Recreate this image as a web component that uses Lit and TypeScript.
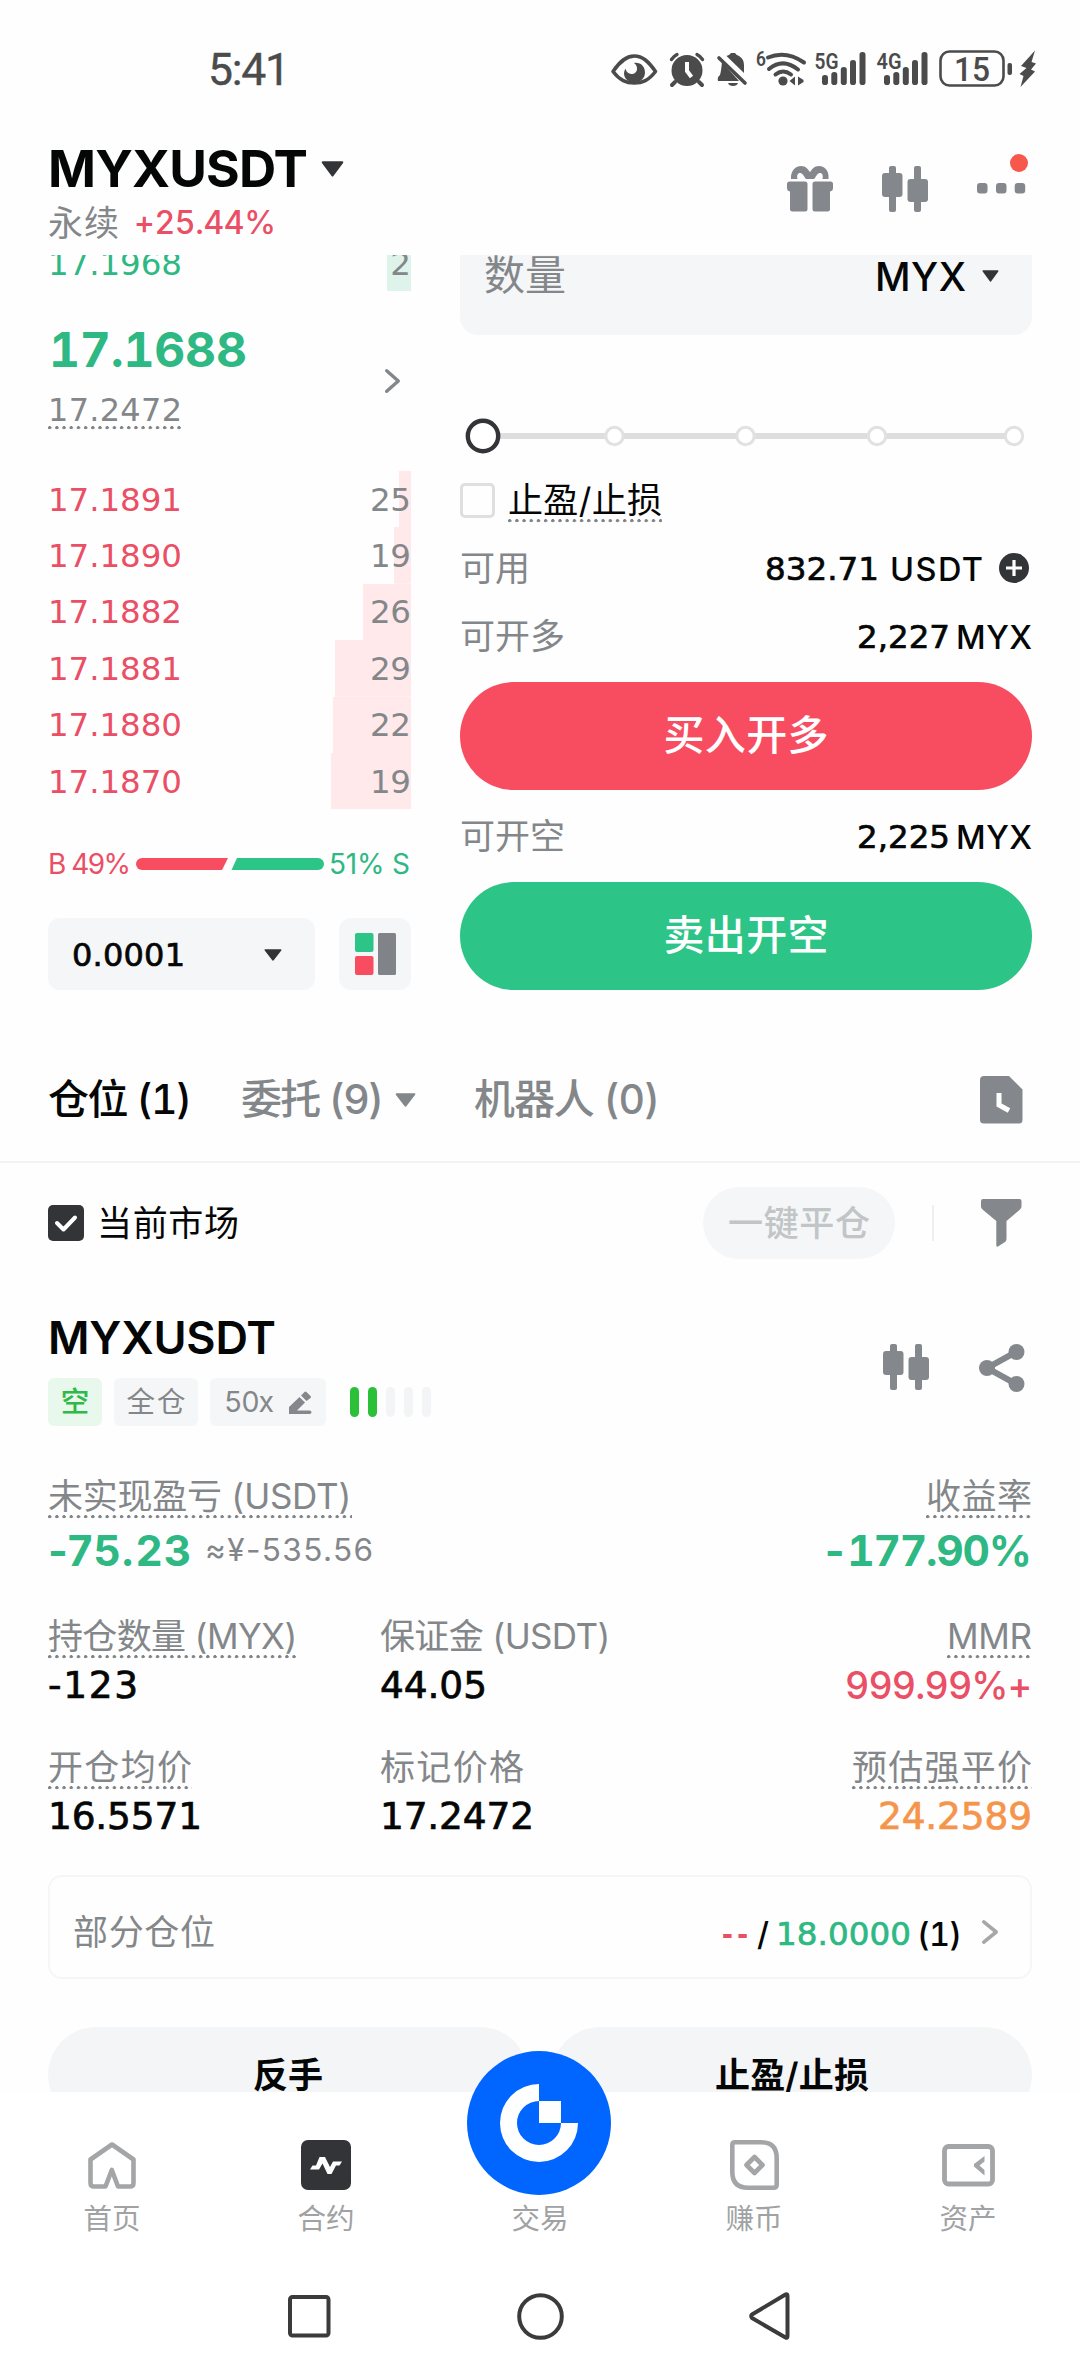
import { LitElement, html, svg, css, nothing } from "lit";
import { customElement, property } from "lit/decorators.js";

/** A run of text whose tracking is set so that it takes up a given width. */
@customElement("fit-text")
class FitText extends LitElement {
  @property() text = "";
  @property({ type: Number }) w = 0;

  static styles = css`
    :host { display: inline-block; white-space: pre; flex: none; }
  `;

  updated() {
    this.style.width = "auto";
    this.style.letterSpacing = "0px";
    if (!this.w) return;
    const natural = this.getBoundingClientRect().width;
    const gaps = Math.max(1, [...this.text].length - 1);
    this.style.letterSpacing = `${((this.w - natural) / gaps).toFixed(3)}px`;
    this.style.width = `${this.w}px`;
  }

  render() { return html`${this.text}`; }
}

const t = (text: string, w = 0, cls = "") =>
  html`<fit-text class=${cls} .text=${text} .w=${w}></fit-text>`;

const caret = (w: number, h: number, color = "#333437") => html`
  <svg class="ic" width=${w} height=${h} viewBox="0 0 20 14" preserveAspectRatio="none">
    <path d="M1.6 1.2H18.4L10 12.6Z" fill=${color} stroke=${color} stroke-width="2" stroke-linejoin="round"/>
  </svg>`;

const candles = html`
  <svg class="ic" width="46" height="46" viewBox="0 0 46 46" fill="#84888c">
    <rect x="7" y="0" width="7" height="46" rx="2"/><rect x="0" y="7" width="20.5" height="24" rx="3"/>
    <rect x="32" y="0" width="7" height="46" rx="2"/><rect x="25.5" y="13" width="20.5" height="23" rx="3"/>
  </svg>`;

const chevron = (w: number, h: number, color: string, sw: number) => html`
  <svg class="ic" width=${w} height=${h} viewBox="0 0 ${w} ${h}" fill="none">
    <path d="M${sw / 2} ${sw / 2}L${w - sw / 2} ${h / 2}L${sw / 2} ${h - sw / 2}" stroke=${color} stroke-width=${sw} stroke-linejoin="round" stroke-linecap="round"/>
  </svg>`;

const bars = (x: number) =>
  [[822, 75], [831.3, 72], [840.8, 67], [850, 60], [859.5, 52]].map(
    ([bx, by]) => svg`<rect x=${bx - 606 + x} y=${by - 46} width="6" height=${85 - by} rx="2.8"/>`
  );

const statusIcons = html`
  <svg class="ic" width="434" height="44" viewBox="0 0 434 44" fill="#4b4b4b">
    <path d="M7 25.500C14 15.500 20 10 28.300 10S42.500 15.500 49.500 25.500C42.500 34.500 36.500 37 28.300 37S14 34.500 7 25.500Z" fill="none" stroke="#4b4b4b" stroke-width="3.600" stroke-linejoin="round"/>
    <path d="M28 17C33.500 21 31 28.500 25.500 28C21.500 27.600 20 25 19.500 22.500C15.500 29 20 36.500 28.500 36.500C34.500 36.500 39 32 39 26.500C39 20.500 34.500 16 28 17Z"/>
    <g transform="translate(63 0)">
      <circle cx="18" cy="24.500" r="15.500"/>
      <path d="M6 36L3 39M30 36L33 39" stroke="#4b4b4b" stroke-width="4" stroke-linecap="round"/>
      <path d="M2.500 13.500Q5 10 8 8.500M33.500 13.500Q31 10 28 8.500" fill="none" stroke="#4b4b4b" stroke-width="3.400" stroke-linecap="round"/>
      <path d="M18 16V25L22.500 31" fill="none" stroke="#fff" stroke-width="4"/>
    </g>
    <g transform="translate(111 0)">
      <path d="M9.500 10Q13 9 14 7H18Q19 9 22 10Q27 13 27 19V27Z"/>
      <path d="M5 16Q4 26 3 29Q0 31 1 35H22Z"/>
      <path d="M11 37H21Q20 40 16 40T11 37Z"/>
      <path d="M2 12L28 37" stroke="#4b4b4b" stroke-width="3.600" stroke-linecap="round"/>
    </g>
    <text class="st" x="150" y="20" font-size="21" textLength="10" lengthAdjust="spacingAndGlyphs">6</text>
    <g fill="none" stroke="#4b4b4b" stroke-width="4">
      <path d="M162 11.500Q180 4 198 16.500" stroke-linecap="round"/>
      <path d="M163 23Q177 11.500 192 23.500" stroke-linecap="round"/>
      <path d="M169.500 28.500Q177 22.500 185 28.500" stroke-linecap="round"/>
    </g>
    <circle cx="177" cy="35" r="4.600"/>
    <path d="M189 30.500V39.500L183.500 35ZM192 30.500L197.500 34V36L192 39.500Z"/>
    <text class="st" x="208.500" y="22.500" font-size="22" textLength="24" lengthAdjust="spacingAndGlyphs">5G</text>
    ${bars(0)}
    <text class="st" x="270.500" y="22.500" font-size="22" textLength="25" lengthAdjust="spacingAndGlyphs">4G</text>
    ${bars(62)}
    <rect x="334.500" y="5.500" width="63" height="34" rx="9" fill="none" stroke="#4b4b4b" stroke-width="2.600"/>
    <text class="st lvl" x="348" y="34.500" font-size="33" textLength="36" lengthAdjust="spacingAndGlyphs">15</text>
    <rect x="401.500" y="17" width="4.500" height="12" rx="2"/>
    <path d="M429 4.500L415 20L420.500 22L413.500 28L417.500 30L414.500 41L429 25.500L425 23.500L430 17.500L425.500 16Z"/>
  </svg>`;

const gift = html`
  <svg class="ic" width="46" height="46" viewBox="0 0 46 46" fill="#84888c">
    <path d="M4 13C3.500 4 9 0 14 0C19 0 20.500 3 23 6C25.500 3 27 0 32 0C37 0 42.500 4 41.500 13H35.500C36.500 9 35 6.500 32.500 7C29.500 8 29 11 27 13H19C17 11 16.500 8 13.500 7C11 6.500 9.500 9 10.500 13Z"/>
    <path d="M2.500 15.500H18Q20.500 15.500 20.500 18V43Q20.500 45.500 18 45.500H5.500Q3 45.500 3 43V25.500Q0 25 0 22V18Q0 15.500 2.500 15.500Z"/>
    <path d="M28 15.500H43.500Q46 15.500 46 18V22Q46 25 43 25.500V43Q43 45.500 40.500 45.500H28Q25.500 45.500 25.500 43V18Q25.500 15.500 28 15.500Z"/>
  </svg>`;

const dots = html`
  <svg class="ic" width="49" height="46" viewBox="0 0 49 46" fill="#84888c">
    <rect x="0" y="17" width="10.500" height="10.500" rx="3"/><rect x="19" y="17" width="10.500" height="10.500" rx="3"/><rect x="37.700" y="17" width="10.500" height="10.500" rx="3"/>
  </svg>`;

const historyIcon = html`
  <svg class="ic" width="43" height="48" viewBox="0 0 43 48">
    <path d="M4 0H29L42.500 13.500V44Q42.500 47.500 39 47.500H4Q0 47.500 0 44V4Q0 0 4 0Z" fill="#84888c"/>
    <path d="M19 17V29L29 34.500" fill="none" stroke="#fff" stroke-width="5"/>
  </svg>`;

const filterIcon = html`
  <svg class="ic" width="41" height="48" viewBox="0 0 41 48">
    <path d="M2 0H38.500Q40.500 0 40.500 2V7.500Q40.500 9 39 10.500L25.500 22V40Q25.500 42 24 43L17 47.500Q15.300 48 15.300 46.500V22L1.500 10.500Q0 9 0 7.500V2Q0 0 2 0Z" fill="#84888c"/>
  </svg>`;

const shareIcon = html`
  <svg class="ic" width="46" height="48" viewBox="0 0 46 48" fill="#84888c">
    <path d="M37 8L8 24L37 40" fill="none" stroke="#84888c" stroke-width="6"/>
    <circle cx="37.500" cy="8" r="8"/><circle cx="8" cy="24" r="8"/><circle cx="37.500" cy="40" r="8"/>
  </svg>`;

const pencil = html`
  <svg class="ic" width="23" height="23" viewBox="0 0 23 23" fill="#84888c">
    <path d="M0 23V16L10.500 6L16 11.500L8 19.500H20.500Q22.500 19.500 22.500 21.200T20.500 23Z"/>
    <path d="M12 4.500L15.500 1Q16.500 0 17.500 1L21.500 5Q22.500 6 21.500 7L17.500 10Z"/>
  </svg>`;

const homeIcon = html`
  <svg class="ic" width="48" height="47" viewBox="0 0 48 47" fill="none" stroke="#a3a5a7" stroke-width="4.600" stroke-linejoin="round">
    <path d="M6 44.500H17.500L23.800 28L30 44.500H42Q45.500 44.500 45.500 41V17.500L24 2.500L2.500 17.500V41Q2.500 44.500 6 44.500Z"/>
  </svg>`;

const contractIcon = html`
  <svg class="ic" width="50" height="50" viewBox="0 0 50 50">
    <rect width="50" height="50" rx="7" fill="#333437"/>
    <path d="M9 29.500L11.500 25.500H15L18.500 17H24L29 27L32 21.500H41L38.500 25.500H35L30.500 34H26.500L21.500 23.500L18 29.500Z" fill="#fff"/>
  </svg>`;

const earnIcon = html`
  <svg class="ic" width="49" height="50" viewBox="0 0 49 50" fill="none" stroke="#a3a5a7" stroke-width="4.600" stroke-linejoin="round">
    <path d="M5 2.300H31Q46.700 2.300 46.700 18V44.500Q46.700 47.700 43.500 47.700H18Q2.300 47.700 2.300 32V5Q2.300 2.300 5 2.300Z"/>
    <path d="M24.500 17L32.500 25L24.500 33L16.500 25Z"/>
  </svg>`;

const walletIcon = html`
  <svg class="ic" width="53" height="43" viewBox="0 0 53 43">
    <rect x="2.500" y="2.500" width="48" height="37.500" rx="4" fill="none" stroke="#a3a5a7" stroke-width="4.800"/>
    <path d="M42.500 12V17.500L37.500 21.500L42.500 26V31.500L32 22.500V20Z" fill="#a3a5a7"/>
  </svg>`;

const logo = html`
  <svg class="ic" width="144" height="144" viewBox="0 0 144 144">
    <circle cx="72" cy="72" r="72" fill="#0066ff"/>
    <path d="M72 33A39 39 0 1 0 111 72H94A22 22 0 1 1 72 50Z" fill="#fff"/>
    <rect x="72" y="50" width="22" height="22" fill="#fff"/>
  </svg>`;

const ASKS = [
  { price: "17.1891", size: "25", bar: 12 },
  { price: "17.1890", size: "19", bar: 17 },
  { price: "17.1882", size: "26", bar: 48 },
  { price: "17.1881", size: "29", bar: 76 },
  { price: "17.1880", size: "22", bar: 78 },
  { price: "17.1870", size: "19", bar: 80 },
];

@customElement("app-root")
class AppRoot extends LitElement {
  static styles = css`
    :host {
      display: block; width: 1080px; height: 2376px; overflow: hidden; background: #fefefe; color: #050606;
      font-family: Inter, "Noto Sans CJK SC", sans-serif; font-feature-settings: "tnum";
      font-size: 35px; line-height: 1.2; white-space: nowrap;
    }
    * { box-sizing: border-box; }
    .ic { display: block; flex: none; overflow: visible; }
    .row { display: flex; align-items: center; }
    .grow { flex: 1; }
    .grey { color: #84878a; }
    .red { color: #ea4f65; }
    .green { color: #2eb883; }
    .orange { color: #f5954b; }
    .fig { font-family: "DejaVu Sans", Inter, sans-serif; font-weight: 400; }
    .num .fig, .val .fig, .sel .fig { -webkit-text-stroke: 0.700px currentColor; }
    .pnum { font-feature-settings: normal; }
    .st { font-family: Roboto, "Noto Sans", sans-serif; font-weight: 600; }
    .lvl { font-weight: 500; }

    .status { display: flex; height: 142px; padding: 46px 40px 0 208px; justify-content: space-between; }
    .time { font: 400 44.500px/49px Roboto, sans-serif; color: #4b4b4b; -webkit-text-stroke: 0.400px #4b4b4b; }
    .header { display: flex; height: 113px; padding: 0 54px 0 48px; justify-content: space-between; align-items: flex-start; }
    .symbol { height: 54px; gap: 13px; font-size: 51.500px; font-weight: 700; }
    .sub { height: 53px; gap: 15px; font-size: 35px; }
    .chg { font-size: 32px; font-weight: 500; margin-top: 2px; }
    .tools { display: flex; gap: 49px; padding-top: 24px; }
    .more { position: relative; }
    .badge { position: absolute; right: -2px; top: -12px; width: 18px; height: 18px; border-radius: 50%; background: #f6594b; }

    .scroll { height: 1837px; overflow: hidden; }
    .trade { display: flex; margin-top: -40px; padding: 0 48px; gap: 49px; }
    .book { width: 363px; padding-top: 19.600px; }
    .lv { display: flex; align-items: center; justify-content: space-between; height: 56.400px; padding-top: 2px; font-size: 32.500px; background: linear-gradient(#ffe9ea, #ffe9ea) no-repeat right / var(--bar) 100%; }
    .lv.bid { background-image: linear-gradient(#def4ea, #def4ea); padding-top: 4px; }
    .mid { display: flex; justify-content: space-between; align-items: center; height: 180px; padding: 0 11px 0 0; }
    .midl { align-self: flex-start; padding-top: 34px; }
    .last { display: flex; align-items: center; height: 50px; margin-bottom: 5px; font-size: 48px; font-weight: 700; padding-left: 1px; }
    .mark { display: flex; align-items: center; height: 60px; font-size: 32px; }
    .dot {
      display: inline-flex; align-items: center; height: 48px;
      background: radial-gradient(circle at 1.700px 1.700px, #808386 1.400px, transparent 1.900px) repeat-x left bottom / 7.200px 5px;
    }
    .markd { height: 42px; }
    .ratio { display: flex; align-items: center; height: 36px; margin: 36.400px 0 36px; font-size: 28px; }
    .ratio fit-text { margin-top: 2px; }
    .ratio svg { margin: 0 5px; }
    .tick { display: flex; gap: 24px; }
    .sel { display: flex; align-items: center; justify-content: space-between; width: 267px; height: 72px; border-radius: 12px; background: #f4f6f8; padding: 2px 33px 0 24px; font-size: 32px; }
    .mode { display: flex; align-items: center; justify-content: center; width: 72px; height: 72px; border-radius: 12px; background: #f4f6f8; }

    .form { width: 572px; }
    .qty { display: flex; align-items: center; height: 120px; border-radius: 18px; background: #f4f6f8; padding: 2px 33px 0 24px; font-size: 41px; }
    .unit { font-size: 39px; font-weight: 500; margin: 2px 16px 0 0; }
    .slider { margin: 71px 0 9px; }
    .tpsl { display: flex; align-items: center; height: 50px; gap: 13px; margin-bottom: 9px; }
    .box { width: 35px; height: 35px; border: 3px solid #dfdfdf; border-radius: 5px; }
    .tpsl .dot { height: 44px; margin-top: 4px; padding-bottom: 4px; }
    .kv { display: flex; align-items: center; justify-content: space-between; height: 68px; }
    .kv.tall { height: 92px; }
    .num { font-size: 32.500px; font-weight: 500; }
    .amt { margin-top: 2px; }
    .avail { display: flex; align-items: center; gap: 16px; padding-right: 3px; }
    .btn { display: flex; align-items: center; justify-content: center; height: 108px; border-radius: 54px; color: #fff; font-size: 41px; font-weight: 500; }
    .buy { background: #f84d61; margin-top: 12px; }
    .sell { background: #2dc487; }

    .tabs { display: flex; align-items: center; height: 125px; margin-top: 48px; padding: 0 57px 0 48px; border-bottom: 2px solid #f2f3f4; font-size: 41px; font-weight: 500; }
    .filter { display: flex; align-items: center; height: 72px; margin-top: 24px; padding: 0 58px 0 48px; }
    .checked { display: flex; align-items: center; justify-content: center; width: 36px; height: 36px; border-radius: 5px; background: #333437; margin-right: 13px; }
    .pill { display: flex; align-items: center; justify-content: center; width: 192px; height: 72px; border-radius: 36px; background: #f4f6f8; color: #c2c5c6; font-weight: 500; }
    .vline { width: 2px; height: 36px; background: #eeeff0; margin: 0 47px 0 37px; }

    .pos { padding: 0 48px; }
    .phead { display: flex; justify-content: space-between; height: 115px; margin-top: 52px; }
    .pname { display: flex; align-items: center; height: 54px; font-size: 45px; font-weight: 600; margin-bottom: 13px; }
    .tags { display: flex; gap: 12px; font-size: 28.500px; }
    .tag { display: flex; align-items: center; justify-content: center; height: 48px; border-radius: 6px; background: #f4f6f8; color: #84878a; }
    .short { width: 54px; background: #e9f8ec; color: #2fb947; font-weight: 500; }
    .margin { width: 84px; }
    .lev { gap: 15px; width: 116px; }
    .pacts { display: flex; gap: 50px; padding: 33px 7px 0 0; }
    .risk { display: flex; gap: 9px; align-items: center; margin-left: 12px; }
    .risk i { width: 9px; height: 30px; border-radius: 5px; background: #f2f4f5; }
    .risk i.on { background: #2cc038; }
    .stats { display: grid; grid-template-columns: 332px 1fr auto; }
    .st1 { margin-top: 45px; }
    .st2 { margin-top: 31px; }
    .st3 { margin-top: 32px; }
    .cell { display: flex; flex-direction: column; align-items: flex-start; }
    .cell.end { align-items: flex-end; }
    .lab { display: flex; align-items: center; height: 48px; padding-top: 1px; color: #84878a; font-size: 35px; }
    .val { display: flex; align-items: center; height: 51px; padding-top: 1px; font-size: 37.500px; font-weight: 500; }
    .big { height: 61px; font-size: 42.500px; font-weight: 700; }
    .fiat { font-size: 31.500px; font-weight: 400; margin-left: 14px; }
    .part { display: flex; align-items: center; height: 104px; margin-top: 34px; border: 2px solid #f5f6f7; border-radius: 14px; padding: 10px 32px 0 23px; }
    .order { margin-top: 4px; }
    .dash { font-family: "Liberation Sans", sans-serif; font-weight: 700; }
    .acts { display: flex; gap: 24px; margin-top: 48px; }
    .act { flex: 1; display: flex; align-items: center; justify-content: center; height: 96px; border-radius: 48px; background: #f3f5f7; font-weight: 600; }

    .bottom { position: relative; height: 284px; background: #fff; }
    .nav { display: grid; grid-template-columns: repeat(5, 1fr); padding: 46px 5px 0; }
    .item { display: flex; flex-direction: column; align-items: center; color: #a0a2a4; font-size: 28.500px; }
    .pic { display: flex; align-items: center; justify-content: center; height: 54px; }
    .item span { display: flex; align-items: center; height: 54px; }
    .fab { position: absolute; left: 467px; top: -41px; }
    .sys { display: flex; align-items: center; justify-content: space-between; height: 120px; margin-top: 10px; padding: 0 290px 0 288px; }

    .g6 { width: 6px; }
    .g9 { width: 9px; }
    .g11 { width: 11px; }
    .g20 { width: 20px; }
    .g49 { width: 49px; }
    .g58 { width: 58px; }
  `;

  private get book() {
    return html`
      <div class="book">
        <div class="lv bid" style="--bar:24px">${t("17.1968", 134, "fig green")}${t("2", 0, "fig grey")}</div>
        <div class="mid">
          <div class="midl">
            <div class="last green">${t("17.1688", 198)}</div>
            <div class="mark grey"><span class="dot markd">${t("17.2472", 134, "fig")}</span></div>
          </div>
          ${chevron(15, 24, "#84878a", 3.4)}
        </div>
        ${ASKS.map((a) => html`
          <div class="lv" style="--bar:${a.bar}px">${t(a.price, 134, "fig red")}${t(a.size, 41, "fig grey")}</div>`)}
        <div class="ratio">
          ${t("B 49%", 83, "red pnum")}
          <svg class="ic" width="188" height="12" viewBox="0 0 188 12">
            <path d="M6 0H92L86 12H6A6 6 0 0 1 6 0Z" fill="#f84d61"/>
            <path d="M101 0H182A6 6 0 0 1 182 12H95.500Z" fill="#2dc487"/>
          </svg>
          ${t("51% S", 81, "green pnum")}
        </div>
        <div class="tick">
          <div class="sel">${t("0.0001", 113, "fig")}${caret(18, 12)}</div>
          <div class="mode">
            <svg class="ic" width="41" height="42" viewBox="0 0 41 42">
              <rect width="18.500" height="19" rx="2" fill="#2dc487"/><rect y="23" width="18.500" height="19" rx="2" fill="#f84d61"/>
              <rect x="23" width="18" height="42" rx="1.500" fill="#808488"/>
            </svg>
          </div>
        </div>
      </div>`;
  }

  private get form() {
    return html`
      <div class="form">
        <div class="qty">${t("数量", 82, "grey")}<span class="grow"></span>${t("MYX", 91, "unit")}${caret(17, 12)}</div>
        <svg class="ic slider" width="572" height="60" viewBox="0 0 572 60">
          <path d="M36 30H550" stroke="#dedede" stroke-width="6"/>
          <g fill="#fff" stroke="#e1e1e1" stroke-width="3">
            ${[154.5, 285.5, 417, 554].map((x) => svg`<circle cx=${x} cy="30" r="8.700"/>`)}
          </g>
          <circle cx="23" cy="30" r="15.200" fill="#fff" stroke="#333437" stroke-width="4.400"/>
        </svg>
        <div class="tpsl"><span class="box"></span><span class="dot">${t("止盈/止损", 154)}</span></div>
        <div class="kv">
          ${t("可用", 70, "grey")}
          <span class="avail">
            <span class="row num amt">${t("832.71", 114, "fig")}<span class="g11"></span>${t("USDT", 93)}</span>
            <svg class="ic" width="30" height="30" viewBox="0 0 30 30"><circle cx="15" cy="15" r="15" fill="#333437"/><path d="M15 7V23M7 15H23" stroke="#fff" stroke-width="3.200"/></svg>
          </span>
        </div>
        <div class="kv">${t("可开多", 105, "grey")}<span class="row num amt">${t("2,227", 93, "fig")}<span class="g6"></span>${t("MYX", 76)}</span></div>
        <div class="btn buy">${t("买入开多", 165)}</div>
        <div class="kv tall">${t("可开空", 105, "grey")}<span class="row num amt">${t("2,225", 93, "fig")}<span class="g6"></span>${t("MYX", 76)}</span></div>
        <div class="btn sell">${t("卖出开空", 165)}</div>
      </div>`;
  }

  private stat(label: string, lw: number, value: string, vw: number, o: { dot?: boolean; end?: boolean; cls?: string; fig?: string; fiat?: boolean } = {}) {
    return html`
      <div class="cell ${o.end ? "end" : ""}">
        <div class="lab"><span class=${o.dot ? "dot" : ""}>${t(label, lw)}</span></div>
        <div class="val ${o.cls ?? ""}">${t(value, vw, o.fig ?? "")}${o.fiat ? t("≈¥-535.56", 168, "fiat grey pnum") : nothing}</div>
      </div>`;
  }

  render() {
    return html`
      <div class="status">${t("5:41", 82, "time")}${statusIcons}</div>
      <div class="header">
        <div>
          <div class="row symbol">${t("MYXUSDT", 260)}${caret(23, 16)}</div>
          <div class="row sub">${t("永续", 71, "grey")}${t("+25.44%", 142, "chg red")}</div>
        </div>
        <div class="tools">${gift}${candles}<div class="more">${dots}<span class="badge"></span></div></div>
      </div>

      <div class="scroll">
        <div class="trade">${this.book}${this.form}</div>

        <div class="tabs">
          ${t("仓位 (1)", 144)}
          <span class="g49"></span>
          ${t("委托 (9)", 143, "grey")}
          <span class="g11"></span>
          ${caret(21, 14, "#84878a")}
          <span class="g58"></span>
          ${t("机器人 (0)", 186, "grey")}
          <span class="grow"></span>${historyIcon}
        </div>

        <div class="filter">
          <span class="checked"><svg class="ic" width="22" height="17" viewBox="0 0 22 17"><path d="M2 8L8.500 14.500L20 2.500" fill="none" stroke="#fff" stroke-width="4" stroke-linecap="round" stroke-linejoin="round"/></svg></span>
          ${t("当前市场", 142)}
          <span class="grow"></span>
          <span class="pill">${t("一键平仓", 142)}</span>
          <span class="vline"></span>${filterIcon}
        </div>

        <div class="pos">
          <div class="phead">
            <div>
              <div class="pname">${t("MYXUSDT", 228)}</div>
              <div class="tags">
                <span class="tag short">${t("空")}</span>
                <span class="tag margin">${t("全仓", 59)}</span>
                <span class="tag lev">${t("50x", 50)}${pencil}</span>
                <span class="risk">${[1, 1, 0, 0, 0].map((on) => html`<i class=${on ? "on" : ""}></i>`)}</span>
              </div>
            </div>
            <div class="pacts">${candles}${shareIcon}</div>
          </div>

          <div class="stats st1">
            ${this.stat("未实现盈亏 (USDT)", 304, "-75.23", 143, { dot: true, cls: "big green", fig: "pnum", fiat: true })}
            <span></span>
            ${this.stat("收益率", 106, "-177.90%", 211, { dot: true, end: true, cls: "big green" })}
          </div>
          <div class="stats st2">
            ${this.stat("持仓数量 (MYX)", 250, "-123", 90, { dot: true, fig: "fig" })}
            ${this.stat("保证金 (USDT)", 231, "44.05", 107, { fig: "fig" })}
            ${this.stat("MMR", 85, "999.99%+", 187, { dot: true, end: true, cls: "red" })}
          </div>
          <div class="stats st3">
            ${this.stat("开仓均价", 144, "16.5571", 154, { dot: true, fig: "fig" })}
            ${this.stat("标记价格", 144, "17.2472", 154, { fig: "fig" })}
            ${this.stat("预估强平价", 180, "24.2589", 154, { dot: true, end: true, cls: "orange", fig: "fig" })}
          </div>

          <div class="part">
            ${t("部分仓位", 142, "grey")}
            <span class="grow"></span>
            <span class="row num order">${t("--", 26, "dash red")}<span class="g9"></span>${t("/", 13)}<span class="g6"></span>${t("18.0000", 135, "fig green")}<span class="g6"></span>${t("(1)", 45)}</span>
            <span class="g20"></span>
            ${chevron(16, 24, "#a5a7a9", 3.6)}
          </div>

          <div class="acts">
            <div class="act">${t("反手", 70)}</div>
            <div class="act">${t("止盈/止损", 154)}</div>
          </div>
        </div>
      </div>

      <div class="bottom">
        <div class="nav">
          ${([[homeIcon, "首页"], [contractIcon, "合约"], [nothing, "交易"], [earnIcon, "赚币"], [walletIcon, "资产"]] as const).map(
            ([icon, label]) => html`<div class="item"><div class="pic">${icon}</div><span>${label}</span></div>`
          )}
        </div>
        <div class="fab">${logo}</div>
        <div class="sys">
          <svg class="ic" width="43" height="43" viewBox="0 0 43 43"><rect x="2" y="2" width="38.500" height="38.500" rx="2.500" fill="none" stroke="#3b3b3b" stroke-width="4"/></svg>
          <svg class="ic" width="47" height="47" viewBox="0 0 47 47"><circle cx="23.500" cy="23.500" r="21.300" fill="none" stroke="#3b3b3b" stroke-width="4"/></svg>
          <svg class="ic" width="41" height="48" viewBox="0 0 41 48"><path d="M38.500 4V44Q38.500 46.500 36.500 45.500L3 26Q1.500 24 3 22.500L36.500 2.500Q38.500 1.500 38.500 4Z" fill="none" stroke="#3b3b3b" stroke-width="4" stroke-linejoin="round"/></svg>
        </div>
      </div>`;
  }
}
